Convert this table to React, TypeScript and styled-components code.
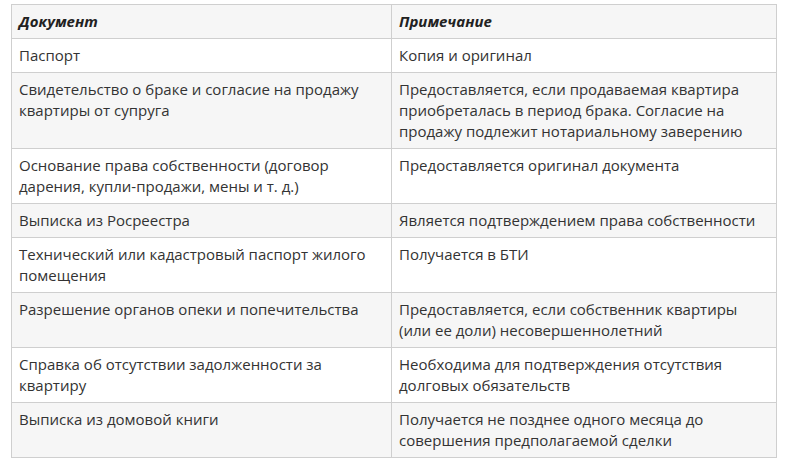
import React from 'react'
import styled, { createGlobalStyle } from 'styled-components'

const GlobalStyle = createGlobalStyle`
  body {
    margin: 0;
    background: #fff;
    font-family: "Open Sans", "Noto Sans", Arial, sans-serif;
    color: #333;
  }
`

const Wrap = styled.div`
  padding: 4px 0 0 11px;
`

const Table = styled.table`
  width: 766px;
  border-collapse: collapse;
  table-layout: fixed;
  font-size: 15px;
  line-height: 21px;
`

const Row = styled.tr<{ $shaded?: boolean }>`
  background: ${(p) => (p.$shaded ? '#f6f6f6' : '#fff')};
`

const HeadCell = styled.th`
  border: 1px solid #cfcfcf;
  padding: 6px 7px;
  text-align: left;
  font-weight: 700;
  font-style: italic;
  color: #222;
  vertical-align: top;
`

const Cell = styled.td`
  border: 1px solid #cfcfcf;
  padding: 6px 7px;
  vertical-align: top;
  color: #333;
`

const rows: [string, string][] = [
  ['Паспорт', 'Копия и оригинал'],
  [
    'Свидетельство о браке и согласие на продажу квартиры от супруга',
    'Предоставляется, если продаваемая квартира приобреталась в период брака. Согласие на продажу подлежит нотариальному заверению',
  ],
  [
    'Основание права собственности (договор дарения, купли-продажи, мены и т. д.)',
    'Предоставляется оригинал документа',
  ],
  ['Выписка из Росреестра', 'Является подтверждением права собственности'],
  ['Технический или кадастровый паспорт жилого помещения', 'Получается в БТИ'],
  [
    'Разрешение органов опеки и попечительства',
    'Предоставляется, если собственник квартиры (или ее доли) несовершеннолетний',
  ],
  [
    'Справка об отсутствии задолженности за квартиру',
    'Необходима для подтверждения отсутствия долговых обязательств',
  ],
  [
    'Выписка из домовой книги',
    'Получается не позднее одного месяца до совершения предполагаемой сделки',
  ],
]

const App: React.FC = () => {
  return (
    <Wrap>
      <GlobalStyle />
      <Table>
        <colgroup>
          <col style={{ width: 380 }} />
          <col />
        </colgroup>
        <thead>
          <Row $shaded>
            <HeadCell>Документ</HeadCell>
            <HeadCell>Примечание</HeadCell>
          </Row>
        </thead>
        <tbody>
          {rows.map(([doc, note], i) => (
            <Row key={doc} $shaded={i % 2 === 1}>
              <Cell>{doc}</Cell>
              <Cell>{note}</Cell>
            </Row>
          ))}
        </tbody>
      </Table>
    </Wrap>
  )
}

export default App
